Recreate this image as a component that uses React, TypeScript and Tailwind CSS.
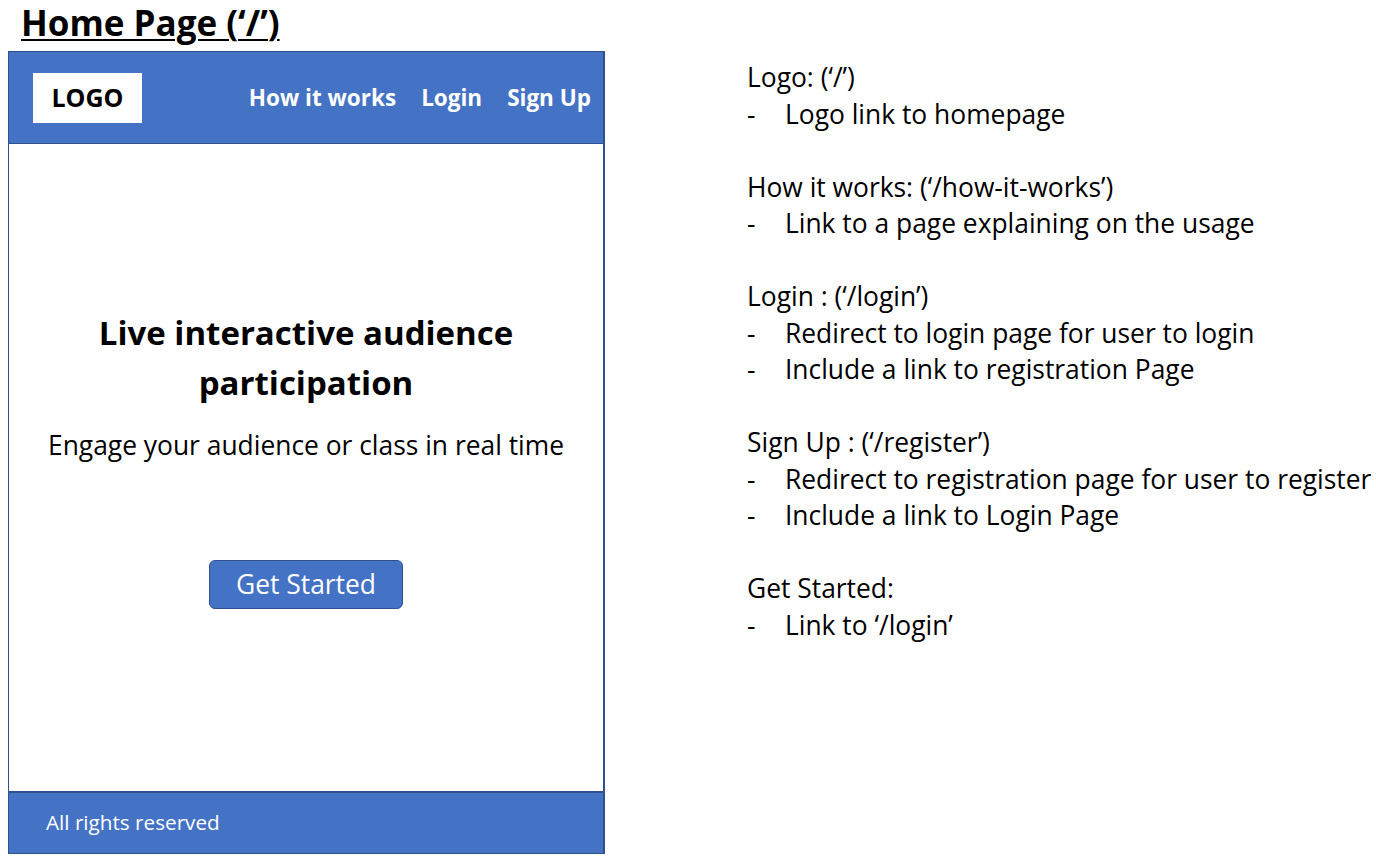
export default function App() {
  const notes = [
    { title: 'Logo: (‘/’)', items: ['Logo link to homepage'] },
    { title: 'How it works: (‘/how-it-works’)', items: ['Link to a page explaining on the usage'] },
    { title: 'Login : (‘/login’)', items: ['Redirect to login page for user to login', 'Include a link to registration Page'] },
    { title: 'Sign Up : (‘/register’)', items: ['Redirect to registration page for user to register', 'Include a link to Login Page'] },
    { title: 'Get Started:', items: ['Link to ‘/login’'] },
  ];

  return (
    <div className="w-[1376px] h-[863px] bg-white flex text-black font-['Open_Sans',sans-serif] overflow-hidden">
      {/* wireframe */}
      <div className="pl-2 w-[747px] shrink-0">
        <h1 className="ml-[13px] h-[51px] text-[35px] font-bold leading-[46px] underline underline-offset-[3px] decoration-[2px]">
          Home Page (‘/’)
        </h1>
        <div className="w-[597px] h-[803px] border border-r-2 border-[#2f528f] flex flex-col">
          <header className="h-[92px] bg-[#4472c4] flex items-center pl-6 pr-3 border-b border-[#2f528f]">
            <div className="w-[109px] h-[50px] bg-white flex items-center justify-center text-[25px] font-bold">
              LOGO
            </div>
            <nav className="ml-auto flex gap-[25px] text-white text-[22.5px] font-bold">
              <span>How it works</span>
              <span>Login</span>
              <span>Sign Up</span>
            </nav>
          </header>
          <main className="flex-1 flex flex-col items-center pt-[164px]">
            <h2 className="text-[33px] font-bold leading-[50px] text-center w-[460px]">
              Live interactive audience participation
            </h2>
            <p className="mt-[20px] text-[26.4px] leading-[34px]">Engage your audience or class in real time</p>
            <button className="mt-[98px] w-[194px] h-[49px] rounded-md bg-[#4472c4] border border-[#2f528f] text-white text-[26.4px]">
              Get Started
            </button>
          </main>
          <footer className="h-[62px] bg-[#4472c4] border-t-2 border-[#2f528f] flex items-center pl-[37px] text-white text-[20.7px]">
            All rights reserved
          </footer>
        </div>
      </div>

      {/* notes */}
      <div className="pt-[59px] text-[26.4px] leading-[36.5px]">
        {notes.map((n) => (
          <div key={n.title} className="mb-[36.5px]">
            <div>{n.title}</div>
            {n.items.map((it) => (
              <div key={it} className="flex">
                <span className="w-[38px] shrink-0">-</span>
                <span className="whitespace-nowrap">{it}</span>
              </div>
            ))}
          </div>
        ))}
      </div>
    </div>
  );
}
